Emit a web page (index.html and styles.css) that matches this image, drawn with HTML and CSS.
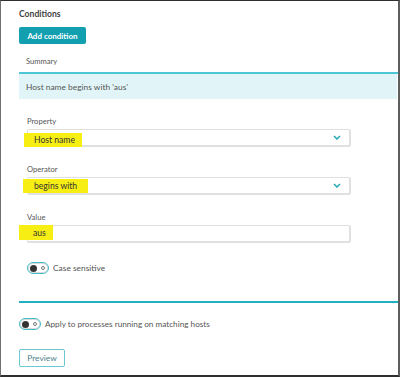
FILE: index.html
```html
<!DOCTYPE html>
<html lang="en">
<head>
  <meta charset="UTF-8">
  <meta name="viewport" content="width=device-width, initial-scale=1.0">
  <title>Conditions</title>
  <link rel="stylesheet" href="styles.css">
</head>
<body>
  <div class="frame">
    <h2 class="section-title">Conditions</h2>
    <button class="btn-primary">Add condition</button>

    <div class="summary-head">Summary</div>
    <div class="summary-row">Host name begins with 'aus'</div>

    <div class="condition-form">
      <div class="field">
        <label>Property</label>
        <div class="select">
          <span class="mark mark-property">Host name</span>
          <svg class="chevron" width="8" height="5" viewBox="0 0 8 5"><polyline points="1,1 4,4 7,1" fill="none" stroke="#1aa3b3" stroke-width="1.4"/></svg>
        </div>
      </div>
      <div class="field">
        <label>Operator</label>
        <div class="select">
          <span class="mark mark-operator">begins with</span>
          <svg class="chevron" width="8" height="5" viewBox="0 0 8 5"><polyline points="1,1 4,4 7,1" fill="none" stroke="#1aa3b3" stroke-width="1.4"/></svg>
        </div>
      </div>
      <div class="field">
        <label>Value</label>
        <div class="select">
          <span class="mark mark-value">aus</span>
        </div>
      </div>
      <div class="toggle-row case-row">
        <span class="toggle"><span class="knob"></span><span class="ring"></span></span>
        <span>Case sensitive</span>
      </div>
    </div>

    <div class="divider"></div>

    <div class="toggle-row apply-row">
      <span class="toggle"><span class="knob"></span><span class="ring"></span></span>
      <span>Apply to processes running on matching hosts</span>
    </div>

    <button class="btn-secondary">Preview</button>
  </div>
</body>
</html>
```

FILE: styles.css
```css
* { margin: 0; padding: 0; box-sizing: border-box; }
body {
  font-family: Lato, 'Open Sans', sans-serif;
  background: #fff;
  color: #4f4f4f;
}
.frame {
  width: 400px;
  height: 377px;
  border-top: 1px solid #2f2f2f;
  border-left: 1px solid #6f6f6f;
  border-right: 2px solid #5e5e5e;
  border-bottom: 2px solid #2f2f2f;
  padding: 7px 0 0 18px;
  overflow: hidden;
}
.section-title {
  font-size: 8.6px;
  font-weight: bold;
  line-height: 12px;
  color: #3f3f3f;
}
.btn-primary {
  display: block;
  margin-top: 7px;
  height: 17px;
  width: 67px;
  background: #12a0b1;
  color: #fff;
  border: none;
  border-radius: 2px;
  font-family: inherit;
  font-size: 8px;
  font-weight: bold;
}
.summary-head {
  margin-top: 11px;
  padding: 0 0 5px 7px;
  line-height: 12px;
  font-size: 7.6px;
  color: #555;
  border-bottom: 2px solid #4cc5d5;
}
.summary-row {
  height: 25px;
  margin-right: 1px;
  padding-left: 7px;
  display: flex;
  align-items: center;
  background: #e1f5f8;
  font-size: 8.4px;
  color: #555;
}
.condition-form {
  padding: 16px 0 0 8px;
}
.field {
  width: 324px;
  margin-bottom: 16px;
}
.field label {
  display: block;
  line-height: 12px;
  margin-bottom: 2px;
  font-size: 7.6px;
  color: #555;
}
.select {
  height: 18px;
  display: flex;
  align-items: center;
  padding: 0 8px 0 6px;
  border: 1px solid #e0e0e0;
  border-right-width: 2px;
  border-bottom-width: 2px;
  border-radius: 2px;
}
.chevron { margin-left: auto; }
.mark {
  height: 14px;
  display: flex;
  align-items: center;
  background: #f7ef14;
  font-size: 8.6px;
  color: #333;
}
.mark-property { margin-left: -10px; padding: 0 7px 0 10px; align-self: flex-end; margin-bottom: -2px; }
.mark-operator { margin-left: -11px; padding: 0 11px 0 11px; }
.mark-value { margin-left: -15px; height: 15px; padding: 0 7px 0 14px; align-self: flex-start; margin-top: -1px; }
.toggle-row {
  display: flex;
  align-items: center;
  gap: 4px;
  font-size: 8.2px;
  color: #555;
}
.case-row { margin-top: 19px; font-size: 8.4px; }
.toggle {
  width: 22px;
  height: 12px;
  border: 1px solid #45bccb;
  border-radius: 6px;
  display: flex;
  align-items: center;
  justify-content: space-between;
  padding: 0 3px 0 2px;
  box-shadow: inset 0 0 0 1px #d9d9d9;
}
.knob {
  width: 7px;
  height: 7px;
  border-radius: 50%;
  background: #333;
}
.ring {
  width: 4px;
  height: 4px;
  border-radius: 50%;
  border: 1px solid #777;
}
.divider {
  margin-top: 27px;
  height: 2px;
  background: #1fb1c0;
}
.apply-row { margin-top: 15px; }
.btn-secondary {
  display: block;
  margin-top: 19px;
  width: 46px;
  height: 18px;
  background: #fff;
  border: 1px solid #6cc9d4;
  border-radius: 2px;
  font-family: inherit;
  font-size: 8.4px;
  color: #4e7f8b;
}
```
